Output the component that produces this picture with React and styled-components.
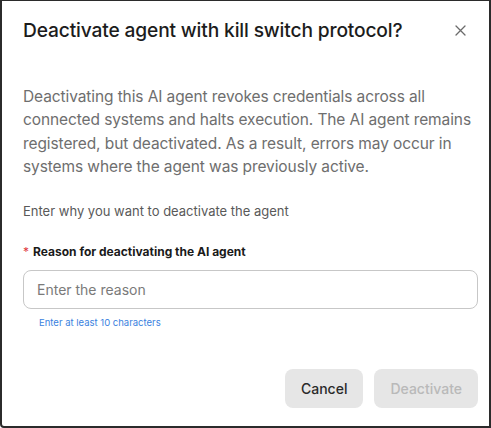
import React from 'react';
import styled, { createGlobalStyle } from 'styled-components';

const GlobalStyle = createGlobalStyle`
    html, body {
        margin: 0;
        padding: 0;
        background: #ffffff;
    }
    * {
        box-sizing: border-box;
    }
`;

const Frame = styled.div`
    width: 491px;
    height: 428px;
    background: #ffffff;
    border: 2px solid #2b2b2b;
    border-top-width: 1px;
    border-bottom-left-radius: 4px;
    font-family: Inter, 'Noto Sans', sans-serif;
    display: flex;
    flex-direction: column;
    padding: 14px 11px 18px 21px;
`;

const Header = styled.div`
    display: flex;
    align-items: center;
    justify-content: space-between;
    height: 30px;
`;

const Title = styled.h2`
    margin: 0;
    font-size: 19.2px;
    font-weight: 500;
    color: #1c1c1c;
    letter-spacing: -0.15px;
`;

const CloseButton = styled.button`
    border: none;
    background: none;
    padding: 0;
    margin-right: 6px;
    width: 24px;
    height: 24px;
    display: flex;
    align-items: center;
    justify-content: center;
    color: #6b6b6b;
    cursor: pointer;
`;

const Body = styled.div`
    display: flex;
    flex-direction: column;
    padding-top: 40px;
`;

const Description = styled.p`
    margin: 0;
    padding-right: 6px;
    font-size: 15.5px;
    line-height: 23.4px;
    color: #6e6e6e;
    letter-spacing: -0.1px;
`;

const Prompt = styled.p`
    margin: 23px 0 0;
    font-size: 13px;
    line-height: 18px;
    color: #595959;
`;

const Field = styled.div`
    display: flex;
    flex-direction: column;
    margin-top: 24px;
`;

const Label = styled.label`
    font-size: 12px;
    font-weight: 700;
    color: #1a1a1a;
    line-height: 16px;
    display: flex;
    gap: 4px;
`;

const Required = styled.span`
    color: #e0393e;
    font-weight: 400;
`;

const Input = styled.input`
    margin-top: 10px;
    height: 39px;
    width: 100%;
    border: 1px solid #c7c7c7;
    border-radius: 8px;
    padding: 0 13px;
    font-family: inherit;
    font-size: 14px;
    color: #1a1a1a;
    outline: none;
    &::placeholder {
        color: #7a7a7a;
    }
`;

const Hint = styled.span`
    margin-top: 7px;
    padding-left: 16px;
    font-size: 9.5px;
    line-height: 13px;
    color: #3a82e0;
`;

const Footer = styled.div`
    margin-top: auto;
    display: flex;
    justify-content: flex-end;
    gap: 11px;
`;

const Button = styled.button`
    height: 39px;
    padding: 0 ${(p) => p.$pad}px;
    border: none;
    border-radius: 8px;
    background: #e6e6e6;
    font-family: inherit;
    font-size: 14px;
    font-weight: 500;
    color: ${(p) => (p.disabled ? '#b9b9b9' : '#2a2a2a')};
    cursor: ${(p) => (p.disabled ? 'default' : 'pointer')};
`;

const CloseIcon = () => (
    <svg width="11" height="11" viewBox="0 0 11 11" fill="none">
        <path d="M1 1L10 10M10 1L1 10" stroke="currentColor" strokeWidth="1.3" strokeLinecap="round" />
    </svg>
);

export default function App() {
    return (
        <>
            <GlobalStyle />
            <Frame>
                <Header>
                    <Title>Deactivate agent with kill switch protocol?</Title>
                    <CloseButton aria-label="Close">
                        <CloseIcon />
                    </CloseButton>
                </Header>
                <Body>
                    <Description>
                        Deactivating this AI agent revokes credentials across all connected systems and halts
                        execution. The AI agent remains registered, but deactivated. As a result, errors may occur
                        in systems where the agent was previously active.
                    </Description>
                    <Prompt>Enter why you want to deactivate the agent</Prompt>
                    <Field>
                        <Label>
                            <Required>*</Required>
                            Reason for deactivating the AI agent
                        </Label>
                        <Input placeholder="Enter the reason" />
                        <Hint>Enter at least 10 characters</Hint>
                    </Field>
                </Body>
                <Footer>
                    <Button $pad={16}>Cancel</Button>
                    <Button $pad={16} disabled>
                        Deactivate
                    </Button>
                </Footer>
            </Frame>
        </>
    );
}
